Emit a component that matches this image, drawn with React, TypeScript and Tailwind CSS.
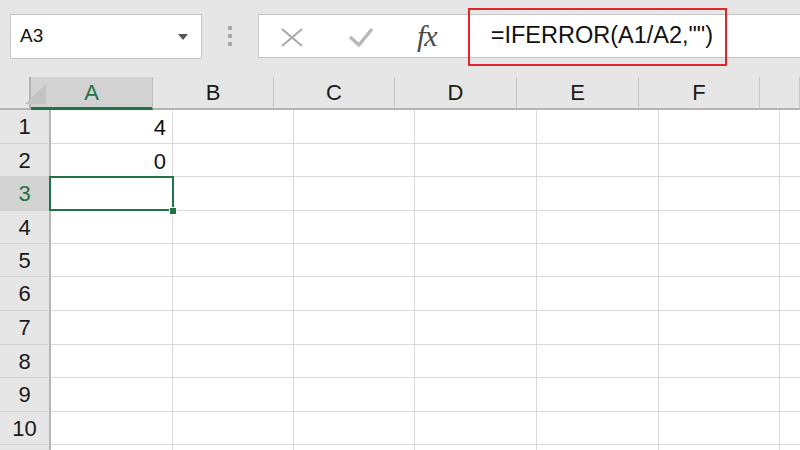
import React from "react";

const cols = [
  { label: "A", w: "w-[122px]" },
  { label: "B", w: "w-[121px]" },
  { label: "C", w: "w-[121px]" },
  { label: "D", w: "w-[122px]" },
  { label: "E", w: "w-[122px]" },
  { label: "F", w: "w-[121px]" },
  { label: "", w: "w-[40px]" },
];

const rowHeights = ["h-[34px]", "h-[33px]", "h-[34px]", "h-[33px]", "h-[33px]", "h-[34px]", "h-[34px]", "h-[33px]", "h-[34px]", "h-[33px]", "h-[34px]"];

const values: Record<number, string> = { 1: "4", 2: "0" };

function NameBox() {
  return (
    <div className="ml-[10px] w-[192px] h-[45px] bg-white border border-[#c6c6c6] flex items-center justify-between pl-[9px] pr-[13px]">
      <span className="text-[19px] text-[#111]">A3</span>
      <svg width="10" height="6" viewBox="0 0 10 6">
        <path d="M0 0 L10 0 L5 6 Z" fill="#555" />
      </svg>
    </div>
  );
}

function FormulaBar() {
  return (
    <div className="ml-[26px] flex-1 h-[44px] bg-white border border-[#c6c6c6] border-r-0 flex items-center">
      {/* cancel */}
      <svg className="ml-[22px] mt-[2px]" width="22" height="19" viewBox="0 0 22 19">
        <path d="M1 1 L21 18 M21 1 L1 18" stroke="#a8a8a8" strokeWidth="2" fill="none" />
      </svg>
      {/* enter */}
      <svg className="ml-[45px] mt-[1px]" width="25" height="20" viewBox="0 0 25 20">
        <path d="M2 10 L11 18 L24 2" stroke="#b9b9b9" strokeWidth="3.5" fill="none" strokeLinejoin="round" />
      </svg>
      <span className="ml-[44px] font-['Liberation_Serif',serif] italic text-[30px] leading-none text-[#4a4a4a] tracking-[-1px]">
        fx
      </span>
      <span className="ml-[54px] text-[23.5px] text-[#111] leading-none">=IFERROR(A1/A2,"")</span>
    </div>
  );
}

export default function App() {
  return (
    <div className="relative w-[800px] h-[450px] overflow-hidden bg-[#e6e6e6] font-['Liberation_Sans',Arial,sans-serif]">
      {/* Toolbar */}
      <div className="h-[77px] flex items-start pt-[14px]">
        <NameBox />
        <div className="ml-[26px] mt-[12px] flex flex-col gap-[4px]">
          <div className="w-[4px] h-[4px] bg-[#a9a9a9]" />
          <div className="w-[4px] h-[4px] bg-[#a9a9a9]" />
          <div className="w-[4px] h-[4px] bg-[#a9a9a9]" />
        </div>
        <FormulaBar />
      </div>
      {/* highlight around formula */}
      <div className="absolute left-[468px] top-[8px] w-[259px] h-[58px] border-2 border-[#e0262c]" />

      {/* Grid */}
      <div className="flex flex-col">
        {/* column headers */}
        <div className="flex h-[33px]">
          <div className="w-[51px] border-r-2 border-b-2 border-[#b4b4b4] bg-[#e6e6e6] relative">
            <svg className="absolute left-[25px] top-[7px]" width="21" height="20" viewBox="0 0 21 20">
              <path d="M21 0 L21 20 L0 20 Z" fill="#c3c3c3" />
            </svg>
          </div>
          {cols.map((c, i) => (
            <div
              key={i}
              className={`${c.w} shrink-0 flex items-center justify-center text-[22px] border-r ${
                i === 0
                  ? "bg-[#d2d2d2] text-[#217346] border-b-[3px] border-b-[#217346] border-r-[#bdbdbd]"
                  : "text-[#1a1a1a] border-b-2 border-b-[#b4b4b4] border-r-[#c8c8c8]"
              }`}
            >
              {c.label}
            </div>
          ))}
        </div>
        {/* rows */}
        {rowHeights.map((h, r) => {
          const n = r + 1;
          const sel = n === 3;
          return (
            <div key={n} className={`flex ${h} shrink-0`}>
              <div
                className={`w-[51px] shrink-0 flex items-center justify-center text-[22px] border-r-2 border-r-[#b4b4b4] border-b border-b-[#d0d0d0] ${
                  sel ? "bg-[#d2d2d2] text-[#217346]" : "bg-[#e6e6e6] text-[#1a1a1a]"
                }`}
              >
                {n <= 10 ? n : ""}
              </div>
              {cols.map((c, i) => (
                <div
                  key={i}
                  className={`${c.w} shrink-0 bg-white border-r border-b border-[#dadada] relative flex items-center justify-end pr-[6px] pt-[2px] text-[22px] text-[#111]`}
                >
                  {i === 0 && values[n]}
                  {i === 0 && sel && (
                    <>
                      <div className="absolute z-10 -left-[2px] -top-[1px] w-[125px] h-[35px] border-2 border-[#217346]" />
                      <div className="absolute z-20 -right-[5px] bottom-[-5px] w-[8px] h-[8px] bg-[#217346] border border-white" />
                    </>
                  )}
                </div>
              ))}
            </div>
          );
        })}
      </div>
    </div>
  );
}
